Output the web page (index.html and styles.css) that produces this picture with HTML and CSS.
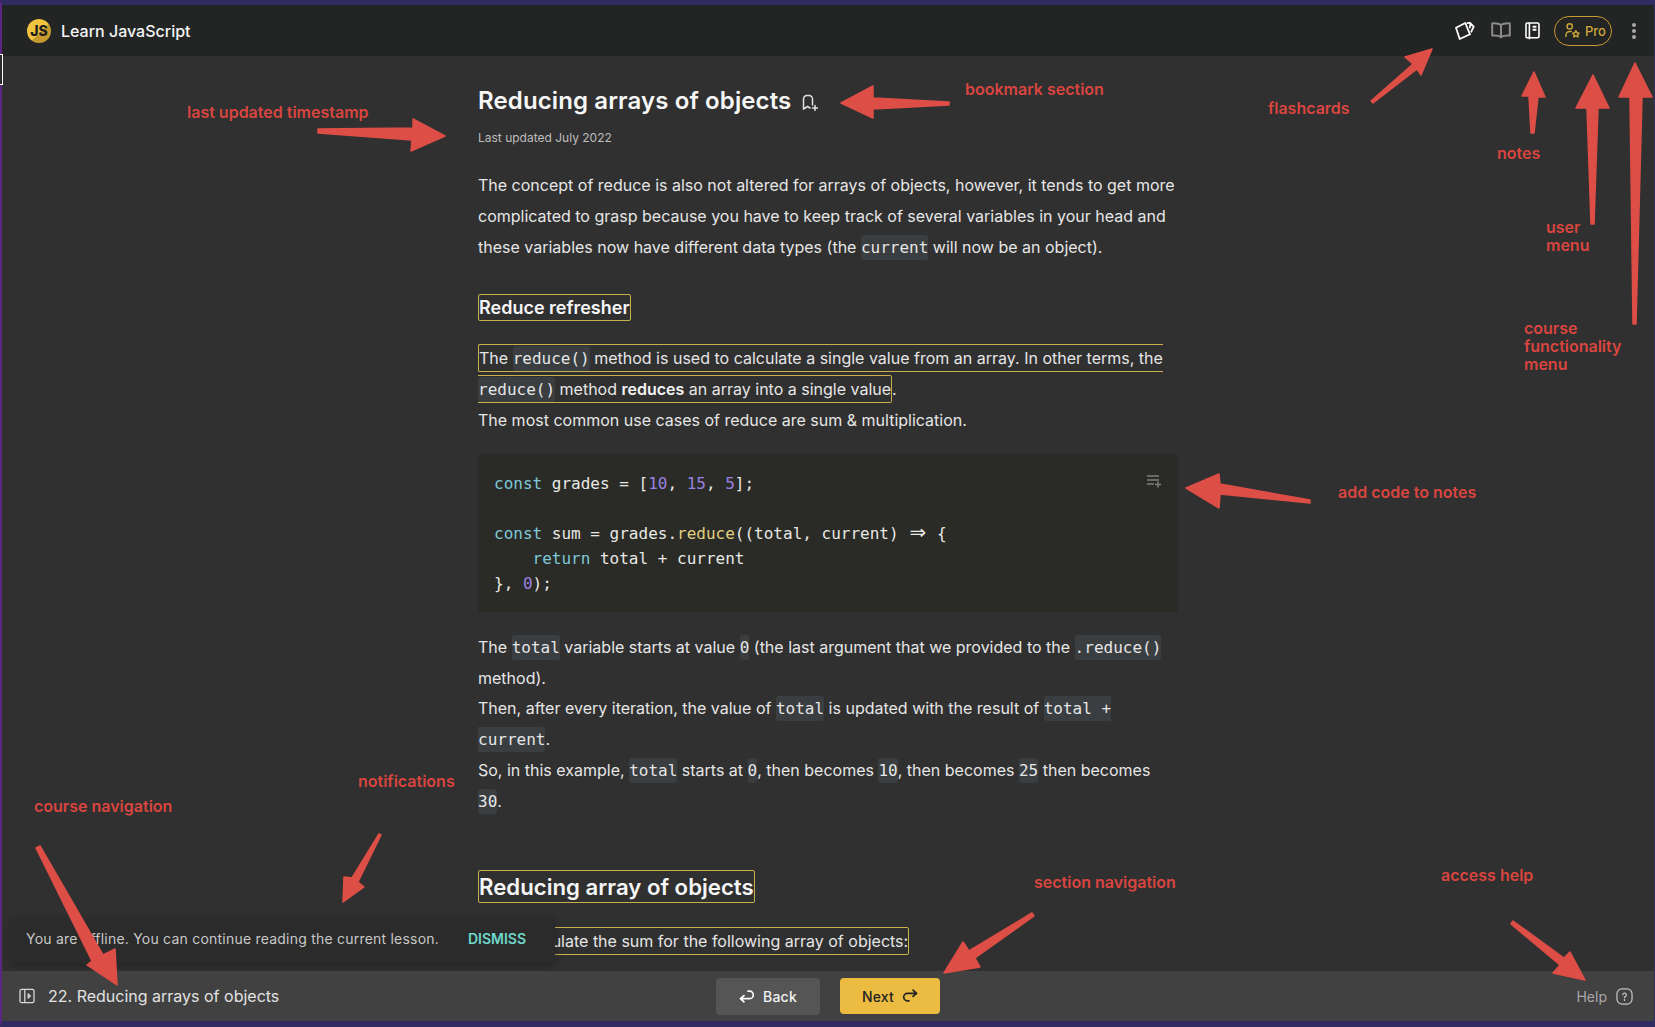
FILE: index.html
```html
<!DOCTYPE html>
<html lang="en">
  <head>
    <meta charset="UTF-8" />
    <meta name="viewport" content="width=device-width, initial-scale=1.0" />
    <title>Learn JavaScript</title>
    <link rel="stylesheet" href="styles.css">
  </head>
  <body>
    <div class="app">
      <header class="topbar">
        <div class="brand">
          <span class="logo">JS</span>
          <span class="brand-name">Learn JavaScript</span>
        </div>
        <div class="tools">
          <svg class="tool tool-cards" viewBox="0 0 20 18" fill="none" stroke="#fff" stroke-width="1.8" stroke-linejoin="round" stroke-linecap="round">
            <path d="M1 5.700L10.300 1 15 12.300 4.700 17z" />
            <path d="M12.500 1.200l2.300-.5 3.900 4-2.400 5M15.500 1.500l-.6 4" />
          </svg>
          <svg class="tool tool-book" viewBox="0 0 20 17" fill="none" stroke="#8b8b8b" stroke-width="2" stroke-linejoin="round">
            <path d="M10 3.400C8.600 1.800 6 1.200 1.200 1.400v12.200c4.600-.2 7.400.2 8.800 1.800 1.400-1.600 4.200-2 8.800-1.800V1.400C14 1.200 11.400 1.800 10 3.400zM10 3.400v12" />
          </svg>
          <svg class="tool tool-notes" viewBox="0 0 15 18" fill="none" stroke="#fff" stroke-width="1.600" stroke-linejoin="round">
            <path d="M4.400 1h8A1.600 1.600 0 0 1 14 2.600v11.600a1.600 1.600 0 0 1-1.600 1.600h-8zM4.400 1h-2A1.400 1.400 0 0 0 1 2.400v12a1.400 1.400 0 0 0 1.400 1.400h2v1.400" />
            <path d="M7.600 4.800h3.800M7.600 7.800h3.800" stroke-width="2" />
          </svg>
          <button class="pro">
            <svg class="pro-icon" viewBox="0 0 16 16" fill="none" stroke="#cfa63a" stroke-width="1.500" stroke-linejoin="round" stroke-linecap="round">
              <circle cx="5" cy="3.600" r="2.800" />
              <path d="M1 14.500V13a4 4 0 0 1 4-4h1.500" />
              <path d="M11.600 8.200l1.100 2.200 2.400.4-1.700 1.700.4 2.400-2.200-1.100-2.200 1.100.4-2.400-1.700-1.700 2.400-.4z" />
            </svg>
            Pro
          </button>
          <div class="dots"><i></i><i></i><i></i></div>
        </div>
      </header>

      <main class="lesson">
        <article class="lesson-body">
          <h1 class="lesson-title">
            Reducing arrays of objects
            <svg class="bookmark" viewBox="0 0 16 17" fill="none" stroke="#e0e0e0" stroke-width="1.500" stroke-linecap="round" stroke-linejoin="round">
              <path d="M1.500 15V5A3.500 3.500 0 0 1 5 1.500h2A3.500 3.500 0 0 1 10.500 5v6M1.500 15l4-2.500 2.500 1.500" />
              <path d="M13 11.500v5M10.500 14h5" />
            </svg>
          </h1>
          <p class="updated">Last updated July 2022</p>

          <p>The concept of reduce is also not altered for arrays of objects, however, it tends to get more complicated to grasp because you have to keep track of several variables in your head and these variables now have different data types (the <code>current</code> will now be an object).</p>

          <h2 class="section-title small"><span class="mark">Reduce refresher</span></h2>

          <p><span class="mark">The <code>reduce()</code> method is used to calculate a single value from an array. In other terms, the <code>reduce()</code> method <strong>reduces</strong> an array into a single value</span>.<br>The most common use cases of reduce are sum &amp; multiplication.</p>

          <div class="code-block">
            <svg class="add-note" viewBox="0 0 16 14" fill="none" stroke="#7d7d7a" stroke-width="1.500">
              <path d="M1 2h12M1 6h12M1 10h7M12 7.500v6M9 10.500h6" />
            </svg>
            <div class="code-line"><span class="kw">const</span> grades = [<span class="num">10</span>, <span class="num">15</span>, <span class="num">5</span>];</div>
            <div class="code-line"></div>
            <div class="code-line"><span class="kw">const</span> sum = grades.<span class="fn">reduce</span>((total, current) <span class="fat-arrow">⇒</span> {</div>
            <div class="code-line">    <span class="kw">return</span> total + current</div>
            <div class="code-line">}, <span class="num">0</span>);</div>
          </div>

          <p>The <code>total</code> variable starts at value <code>0</code> (the last argument that we provided to the <code>.reduce()</code> method).<br>Then, after every iteration, the value of <code>total</code> is updated with the result of <code>total + current</code>.<br>So, in this example, <code>total</code> starts at <code>0</code>, then becomes <code>10</code>, then becomes <code>25</code> then becomes <code>30</code>.</p>

          <h2 class="section-title large"><span class="mark">Reducing array of objects</span></h2>

          <p class="last"><span class="mark">Let's calculate the sum for the following array of objects:</span></p>
        </article>

        <div class="toast">
          <span>You are offline. You can continue reading the current lesson.</span>
          <span class="dismiss">DISMISS</span>
        </div>
      </main>

      <footer class="bottombar">
        <div class="course-nav">
          <svg class="panel-icon" viewBox="0 0 16 16" fill="none" stroke="#d8d8d8" stroke-width="1.300" stroke-linejoin="round">
            <rect x="1" y="1.400" width="14" height="13.200" rx="1.600" />
            <path d="M5.800 1.400v13.200M9.200 6l2.200 2-2.200 2z" />
          </svg>
          <span>22. Reducing arrays of objects</span>
        </div>
        <div class="section-nav">
          <button class="btn btn-back">
            <svg class="btn-icon" viewBox="0 0 16 14" fill="none" stroke="#fff" stroke-width="1.700" stroke-linecap="round" stroke-linejoin="round">
              <path d="M5 6.600L1.400 9.600 5 12.800M1.600 9.600h9a3.700 3.700 0 0 0 0-7.400H9" />
            </svg>
            Back
          </button>
          <button class="btn btn-next">
            Next
            <svg class="btn-icon" viewBox="0 0 16 14" fill="none" stroke="#222" stroke-width="1.700" stroke-linecap="round" stroke-linejoin="round">
              <path d="M11 1.200l3.600 3.200L11 7.400M14.400 4.400h-9a3.700 3.700 0 0 0 0 7.400H7" />
            </svg>
          </button>
        </div>
        <div class="help">
          <span>Help</span>
          <svg class="help-icon" viewBox="0 0 18 18" fill="none" stroke="#c4c4c4" stroke-width="1.300">
            <rect x="1" y="1" width="16" height="16" rx="5.400" />
            <path d="M7.200 7.200a1.900 1.900 0 1 1 2.800 1.700c-.7.400-1 .8-1 1.500" stroke-linecap="round" />
            <path d="M9 12.200v1" stroke-linecap="round" />
          </svg>
        </div>
      </footer>
    </div>

    <div class="caret"></div>

    <!-- red annotations drawn on top of the screenshot -->
    <svg class="arrows" viewBox="0 0 1655 1027">
      <polygon points="318,129 413,128 413,119 445,136 411,151 412,140 318,133" />
      <polygon points="841,103 873,86 873,98 949,102 949,105 873,109 873,118" />
      <polygon points="1432,49 1405,57 1413,64 1371,101 1373,103 1417,69 1421,75" />
      <polygon points="1534,72 1522,96 1529,96 1531,133 1534,133 1538,97 1545,97" />
      <polygon points="1593,75 1576,108 1587,108 1591,224 1594,224 1598,108 1609,108" />
      <polygon points="1635,63 1619,97 1630,97 1633,324 1636,324 1642,97 1652,97" />
      <polygon points="1186,488 1219,474 1220,484 1310,500 1310,503 1220,494 1219,508" />
      <polygon points="379,834 352,878 344,877 343,902 364,887 358,882 381,835" />
      <polygon points="36,848 92,961 87,965 117,985 115,949 103,955 40,846" />
      <polygon points="1032,913 969,951 963,942 944,973 980,967 975,958 1034,916" />
      <polygon points="1511,924 1560,965 1553,973 1585,980 1570,952 1564,958 1513,921" />
    </svg>

    <span class="note note-updated">last updated timestamp</span>
    <span class="note note-bookmark">bookmark section</span>
    <span class="note note-cards">flashcards</span>
    <span class="note note-notes">notes</span>
    <span class="note note-user">user<br>menu</span>
    <span class="note note-course">course<br>functionality<br>menu</span>
    <span class="note note-code">add code to notes</span>
    <span class="note note-toast">notifications</span>
    <span class="note note-nav">course navigation</span>
    <span class="note note-section">section navigation</span>
    <span class="note note-help">access help</span>
  </body>
</html>
```

FILE: styles.css
```css
* {
  box-sizing: border-box;
}

html,
body {
  height: 100%;
}

body {
  margin: 0;
  overflow: hidden;
  background-color: #302c62;
  font-family: Inter, "Noto Sans", sans-serif;
  font-size: 16px;
  color: #e6e6e6;
}

button {
  font-family: inherit;
  border: 0;
}

.app {
  display: flex;
  flex-direction: column;
  height: 100vh;
  border-top: 5px solid #302c62;
  border-bottom: 6px solid #302c62;
  border-left: 2px solid #5b2680;
  border-right: 1px solid #302c62;
}

/* top bar */
.topbar {
  display: flex;
  justify-content: space-between;
  align-items: center;
  flex: 0 0 51px;
  padding: 0 18px 0 25px;
  background-color: #232524;
}

.brand {
  display: flex;
  align-items: center;
  gap: 10px;
}

.logo {
  display: flex;
  justify-content: center;
  align-items: center;
  width: 24px;
  height: 24px;
  border-radius: 50%;
  background: linear-gradient(135deg, #f0c440 55%, #c79a2e 55%);
  font-size: 14px;
  font-weight: 800;
  color: #1d1f1e;
}

.brand-name {
  font-weight: 500;
  color: #f4f4f4;
}

.tools {
  display: flex;
  align-items: center;
}

.tool-cards {
  width: 20px;
  height: 18px;
}

.tool-book {
  width: 20px;
  height: 17px;
  margin-left: 16px;
}

.tool-notes {
  width: 15px;
  height: 18px;
  margin-left: 14px;
}

.pro {
  display: flex;
  align-items: center;
  gap: 5px;
  width: 58px;
  height: 30px;
  margin-left: 14px;
  padding: 0 0 0 10px;
  border: 1px solid #c79c2f;
  border-radius: 15px;
  background: none;
  font-size: 13px;
  font-weight: 500;
  color: #cfa63a;
}

.pro-icon {
  width: 15px;
  height: 15px;
}

.dots {
  display: flex;
  flex-direction: column;
  gap: 2px;
  margin-left: 20px;
}

.dots i {
  width: 4px;
  height: 4px;
  border-radius: 50%;
  background-color: #a8a8a8;
}

/* lesson */
.lesson {
  position: relative;
  flex: 1;
  overflow: hidden;
  background-color: #303030;
}

.lesson-body {
  width: 700px;
  margin-left: 476px;
  padding-top: 30px;
}

.lesson-title {
  display: flex;
  align-items: center;
  gap: 11px;
  margin: 0;
  font-size: 24px;
  line-height: 30px;
  font-weight: 600;
  letter-spacing: 0.12px;
  color: #f6f6f6;
}

.bookmark {
  width: 16px;
  height: 17px;
  margin-top: 3px;
}

.updated {
  margin: 14px 0 0;
  font-size: 12px;
  line-height: 16px;
  color: #bdbdbd;
}

p {
  margin: 24px 0 0;
  line-height: 30.8px;
}

code {
  padding: 3px 0;
  border-radius: 3px;
  background-color: #3a3e41;
  font-family: "DejaVu Sans Mono", "Liberation Mono", monospace;
  font-size: 16px;
  line-height: 29.6px;
}

strong {
  font-weight: 600;
  color: #f4f4f4;
}

.mark {
  border: 1px solid #c8b04c;
  border-radius: 2px;
  padding: 3px 0;
}

.section-title {
  margin: 0;
  font-weight: 600;
  color: #f6f6f6;
}

.section-title .mark {
  padding: 2px 0;
}

.section-title.small {
  margin-top: 32px;
  font-size: 18px;
  line-height: 28px;
}

.section-title.small + p {
  margin-top: 21px;
}

.section-title.large {
  margin-top: 53px;
  font-size: 22.2px;
  line-height: 33px;
}

.section-title.large + p {
  margin-top: 23px;
}

.code-block {
  position: relative;
  margin-top: 18px;
  padding: 17px 16px 16px;
  border-radius: 4px;
  background-color: #2a2b27;
}

.code-line {
  height: 25px;
  white-space: pre;
  font-family: "DejaVu Sans Mono", "Liberation Mono", monospace;
  font-size: 16px;
  line-height: 25px;
  color: #e8e8e4;
}

/* stands in for the => ligature, two cells wide */
.fat-arrow {
  display: inline-block;
  width: 19.2px;
  font-family: "DejaVu Sans", sans-serif;
  font-size: 20px;
  line-height: 1;
  text-align: center;
}

.code-block + p {
  margin-top: 20px;
}

.add-note {
  position: absolute;
  top: 20px;
  right: 16px;
  width: 16px;
  height: 14px;
}

.kw {
  color: #7fc8d8;
}

.num {
  color: #9a80e0;
}

.fn {
  color: #e0d080;
}

.toast {
  position: absolute;
  left: 8px;
  bottom: 8px;
  display: flex;
  align-items: center;
  justify-content: space-between;
  width: 545px;
  height: 45px;
  padding: 0 29px 4px 16px;
  border-radius: 4px;
  background-color: #2b2b2b;
  box-shadow: 0 3px 8px rgba(0, 0, 0, 0.25);
  font-size: 14px;
  letter-spacing: 0.22px;
  color: #c8c8c8;
}

.dismiss {
  font-weight: 600;
  letter-spacing: 0;
  color: #6fd9cb;
}

/* bottom bar */
.bottombar {
  display: grid;
  grid-template-columns: 1fr auto 1fr;
  align-items: center;
  flex: 0 0 50px;
  padding: 0 17px;
  background-color: #414141;
}

.course-nav {
  display: flex;
  align-items: center;
  gap: 13px;
  color: #e2e2e2;
}

.panel-icon {
  width: 16px;
  height: 16px;
}

.section-nav {
  display: flex;
  align-items: center;
  gap: 20px;
}

.btn {
  display: flex;
  justify-content: center;
  align-items: center;
  gap: 8px;
  height: 36px;
  border-radius: 4px;
  font-size: 14px;
  font-weight: 500;
  letter-spacing: 0.2px;
}

.btn-back {
  width: 104px;
  height: 37px;
  background-color: #555555;
  color: #f4f4f4;
}

.btn-next {
  width: 100px;
  background-color: #ecbb41;
  color: #222222;
}

.btn-icon {
  width: 16px;
  height: 14px;
}

.help {
  display: flex;
  justify-content: flex-end;
  align-items: center;
  gap: 9px;
  margin-right: 4px;
  font-size: 14px;
  color: #a8a8a8;
}

.help-icon {
  width: 17px;
  height: 17px;
}

.caret {
  position: absolute;
  left: 0;
  top: 54px;
  width: 3px;
  height: 31px;
  border: 1px solid #ffffff;
  border-left: 0;
  background-color: #2b2b2b;
}

/* annotations */
.arrows {
  position: absolute;
  inset: 0;
  width: 1655px;
  height: 1027px;
  pointer-events: none;
}

.arrows polygon {
  fill: #dd4e46;
  stroke: #dd4e46;
  stroke-width: 1.5;
  stroke-linejoin: round;
}

.note {
  position: absolute;
  font-size: 16px;
  line-height: 18px;
  font-weight: 600;
  color: #d9453f;
}

.note-updated { left: 187px; top: 103px; }
.note-bookmark { left: 965px; top: 80px; }
.note-cards { left: 1268px; top: 99px; }
.note-notes { left: 1497px; top: 144px; }
.note-user { left: 1546px; top: 218px; }
.note-course { left: 1524px; top: 319px; }
.note-code { left: 1338px; top: 483px; }
.note-toast { left: 358px; top: 772px; }
.note-nav { left: 34px; top: 797px; }
.note-section { left: 1034px; top: 873px; }
.note-help { left: 1441px; top: 866px; }
```
